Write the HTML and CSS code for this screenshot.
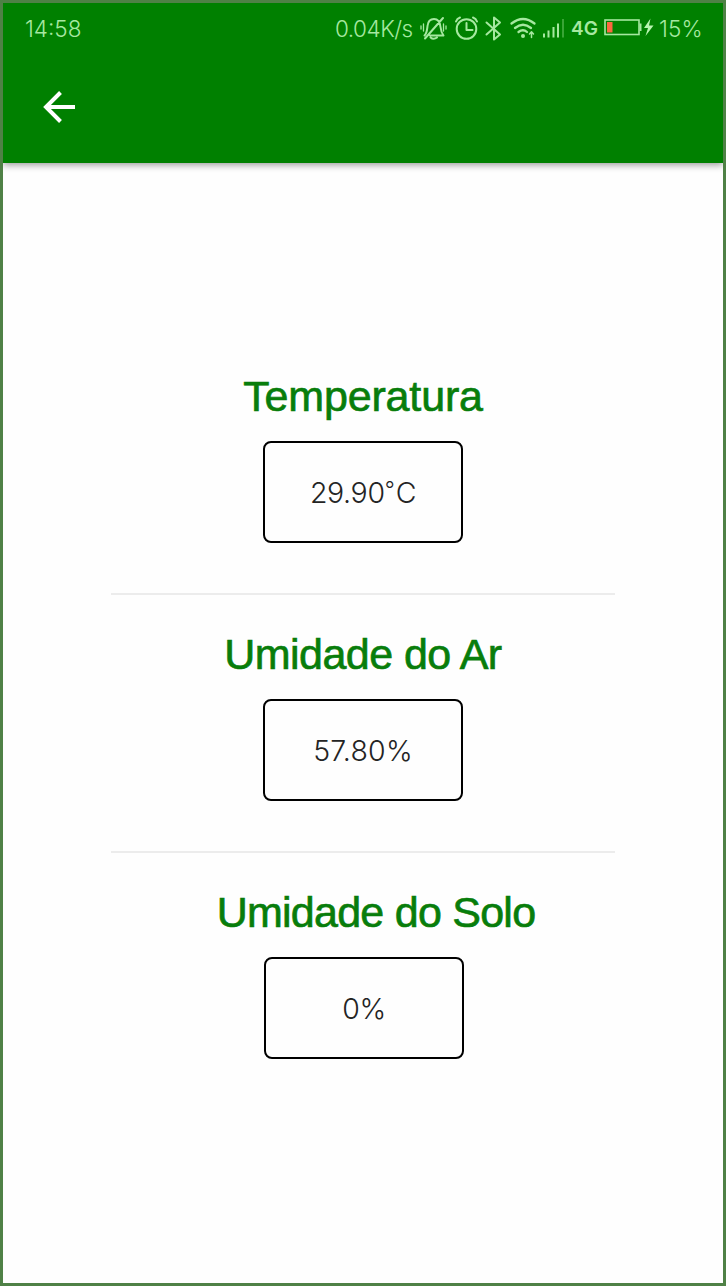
FILE: index.html
```html
<!DOCTYPE html>
<html lang="pt-BR">
<head>
<meta charset="utf-8">
<title>Sensores</title>
<link rel="stylesheet" href="styles.css">
</head>
<body>
<div class="screen">
  <header class="appbar">
    <div class="status">
      <span class="clock">14:58</span>
      <span class="speed">0.04K/s</span>
      <svg class="icons" width="146" height="30" viewBox="419 12 146 30" fill="none" stroke="#a6e8a0" stroke-width="2" stroke-linecap="round" stroke-linejoin="round">
        <path d="M424.500 34.500C427 32 427 29 427.500 25C428 20 430 18 434 18C438 18 440 21 440.500 26C441 30 441.500 32 443.500 34.500H430M425 37.500L443 17M430.500 36.500Q433.500 39 437 36.500"/>
        <path stroke-width="1.300" d="M423.500 23v7M421 25v3M443.500 23v7M446 25v3"/>
        <circle cx="466.500" cy="28" r="9.800"/>
        <path d="M466.500 22v7h6M456 20.500q1-3 4-4M473 16.500q3 1 4 4"/>
        <path d="M486.500 21.500L500 33.500L494 38.500V16.500L500 21.500L486.500 33.500"/>
        <path stroke-width="2.300" d="M511.500 22.500Q523 13.500 534.500 22.500M515 27Q523 20.500 531 27M518.500 31Q523 27.500 527 31"/>
        <circle cx="523" cy="35" r="2" fill="#a6e8a0" stroke="none"/>
        <path stroke-width="1.500" d="M531.500 36.500V31M529.500 33l2-2.200l2 2.200"/>
        <path stroke-linecap="butt" d="M544 36.500v-4M548.500 36.500v-7M553.500 36.500v-10.500M558 36.500v-14"/>
        <path stroke-linecap="butt" stroke="#4db249" stroke-width="1.500" d="M563 36.500v-18.500"/>
      </svg>
      <span class="network">4G</span>
      <svg class="battery" width="52" height="24" viewBox="603 16 52 24">
        <rect x="605" y="20" width="34" height="14.500" fill="none" stroke="#a6e8a0" stroke-width="1.600"/>
        <path fill="#a6e8a0" d="M639.500 23.500h2v7.500h-2z"/>
        <path fill="#fb6840" d="M607 22h5.500v10.500H607z"/>
        <path fill="#b8f5b0" d="M650.500 18.500L644 28h4l-2.500 8L653.500 25.500h-4.500z"/>
      </svg>
      <span class="percent">15%</span>
    </div>
    <svg class="back" width="36" height="36" viewBox="41 89 36 36" fill="none" stroke="#fff" stroke-width="4" stroke-linecap="butt" stroke-linejoin="miter">
      <path d="M75 107H46M60.500 92.500L46 107L60.500 121.500"/>
    </svg>
  </header>
  <main class="readings">
    <section class="reading">
      <h2 class="title title-temp">Temperatura</h2>
      <div class="value value-temp">29.90<span class="degree">°</span>C</div>
    </section>
    <section class="reading">
      <h2 class="title title-air">Umidade do Ar</h2>
      <div class="value value-air">57.80%</div>
    </section>
    <section class="reading reading-soil">
      <h2 class="title title-soil">Umidade do Solo</h2>
      <div class="value value-soil">0%</div>
    </section>
  </main>
</div>
</body>
</html>
```
FILE: styles.css
```css
* { box-sizing: border-box; }
body { margin: 0; font-family: Inter, "Liberation Sans", sans-serif; }
.screen { width: 726px; height: 1286px; border: 3px solid #4f8146; background: #fefefe; overflow: hidden; }
.appbar { height: 160px; background: #008000; box-shadow: 0 2px 7px rgba(0, 0, 0, .4); }
.status { display: flex; align-items: center; height: 50px; padding-left: 22px; color: #a6e8a0; font-size: 22.500px; font-weight: 300; white-space: nowrap; }
.clock { width: 310px; }
.speed { width: 84px; letter-spacing: -.5px; }
.icons { flex: none; }
.network { width: 30px; margin-left: 6px; font-size: 19px; font-weight: 600; }
.battery { flex: none; margin-left: 2px; }
.percent { margin-left: 4px; letter-spacing: .2px; }
.back { display: block; margin: 36px 0 0 38px; }
.readings { display: flex; flex-direction: column; align-items: center; padding-top: 174px; }
.reading { display: flex; flex-direction: column; align-items: center; width: 504px; height: 258px; padding-top: 32px; border-bottom: 2px solid #ececec; }
.reading-soil { border-bottom: 0; }
.title { margin: 0; height: 72px; flex: none; line-height: 54px; font-family: "Liberation Sans", Arial, sans-serif; font-size: 43px; font-weight: 400; color: #087d0b; -webkit-text-stroke: .7px #087d0b; white-space: nowrap; }
.title-temp { letter-spacing: -.15px; }
.title-air { letter-spacing: -.55px; }
.title-soil { letter-spacing: -.75px; transform: translateX(13px); }
.value { display: flex; flex: none; align-items: center; justify-content: center; width: 200px; height: 102px; border: 2px solid #000; border-radius: 8px; font-size: 28.500px; font-weight: 300; color: #242424; }
.value-temp { letter-spacing: -.35px; }
.degree { width: 11px; height: 34px; font-size: 22px; line-height: 29px; }
.value-air { letter-spacing: .2px; }
.value-soil { transform: translateX(1px); letter-spacing: -.3px; }
```
